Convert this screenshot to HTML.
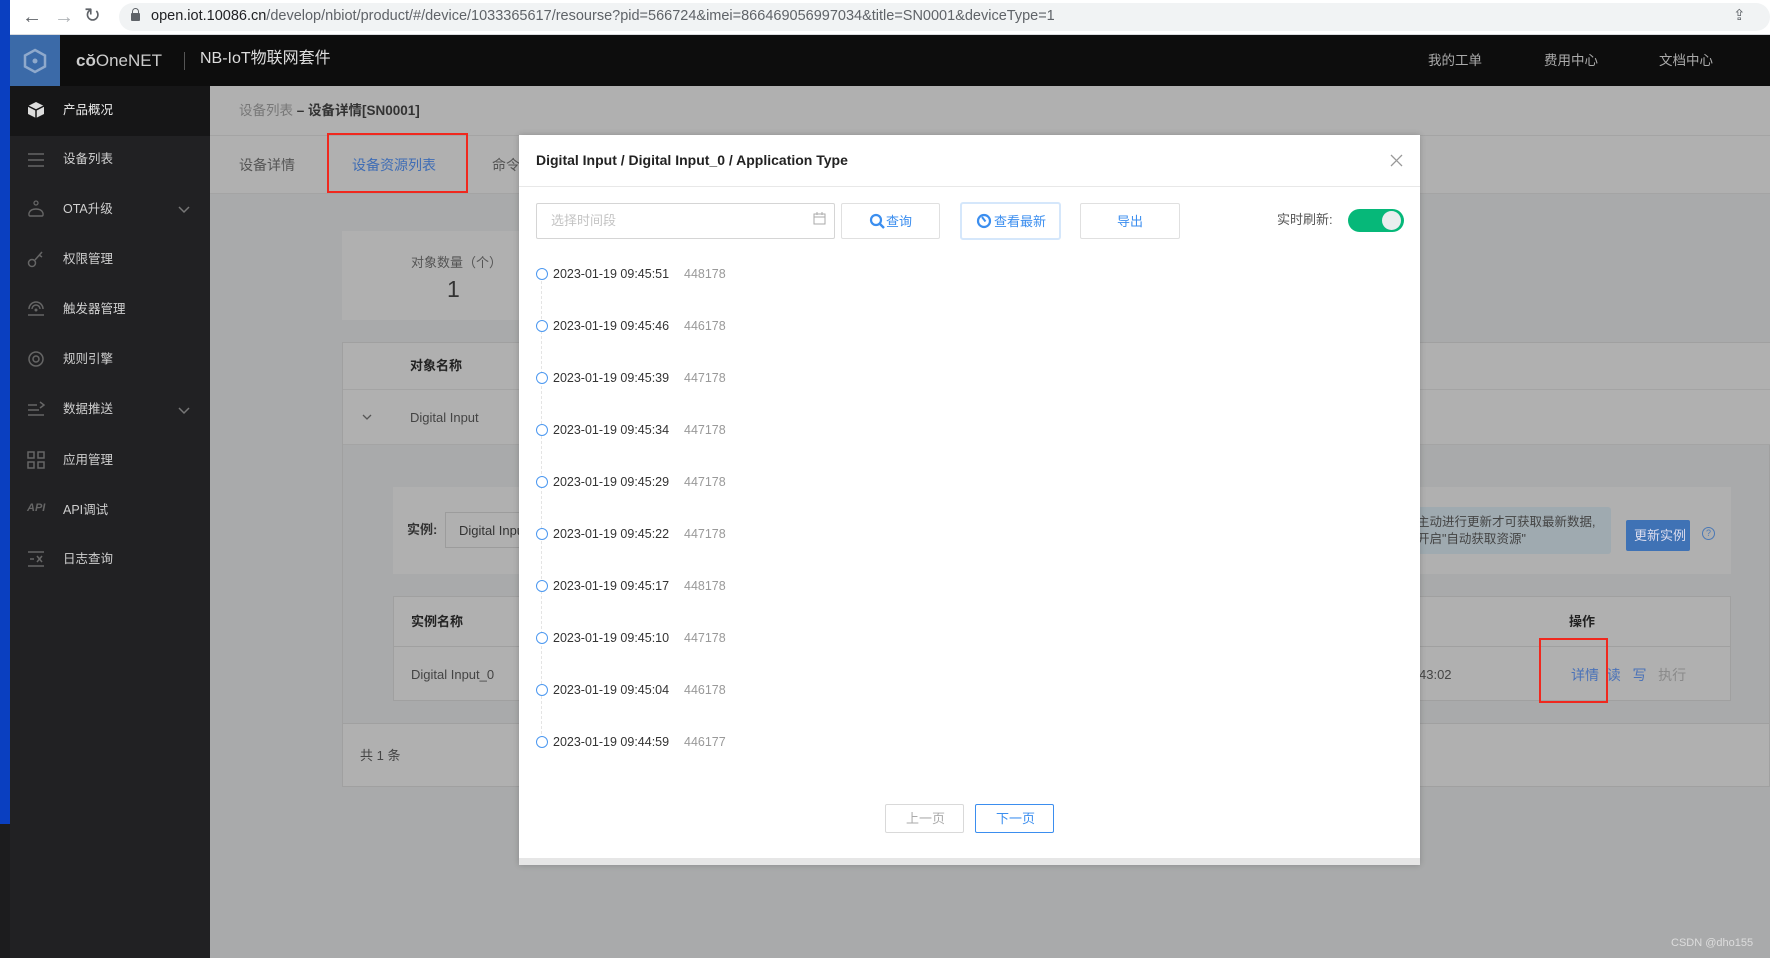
<!DOCTYPE html>
<html><head><meta charset="utf-8"><style>
*{box-sizing:border-box;margin:0;padding:0}
body{width:1770px;height:958px;overflow:hidden;position:relative;font-family:"Liberation Sans","Noto Sans CJK SC",sans-serif;background:#a9aaab;font-size:13.5px;color:#333}
.a{position:absolute}
.t{position:absolute;white-space:nowrap;line-height:1}
.side .t{color:#cfcfcf;font-size:12.5px}
.side svg{position:absolute}
.d{font-size:12.5px}
</style></head><body>
<div class="a" style="left:0;top:0;width:10px;height:824px;background:#0a3fc0"></div>
<div class="a" style="left:0;top:824px;width:10px;height:134px;background:#1c1c1e"></div>
<div class="a" style="left:10px;top:0;width:1760px;height:35px;background:#fff;border-bottom:1px solid #dadce0"></div>
<div class="a" style="left:119px;top:3px;width:1651px;height:28px;background:#f1f3f4;border-radius:14px"></div>
<div class="t" style="left:22px;top:7px;font-size:20px;color:#5f6368">←</div>
<div class="t" style="left:54px;top:7px;font-size:20px;color:#b0b3b7">→</div>
<div class="t" style="left:84px;top:6px;font-size:20px;color:#5f6368">↻</div>
<div class="a" style="left:131px;top:13px;width:9px;height:8px;background:#5f6368;border-radius:1px"></div>
<div class="a" style="left:132px;top:8px;width:7px;height:7px;border:1.5px solid #5f6368;border-bottom:none;border-radius:4px 4px 0 0"></div>
<div class="t" style="left:151px;top:9px;font-size:14.5px;color:#202124">open.iot.10086.cn<span style="color:#5f6368">/develop/nbiot/product/#/device/1033365617/resourse?pid=566724&amp;imei=866469056997034&amp;title=SN0001&amp;deviceType=1</span></div>
<div class="t" style="left:1733px;top:8px;font-size:15px;color:#5f6368">⇪</div>
<div class="a" style="left:10px;top:35px;width:1760px;height:51px;background:#0d0d0d"></div>
<div class="a" style="left:10px;top:35px;width:50px;height:51px;background:#3b6aa8"></div>
<svg class="a" style="left:22px;top:48px" width="26" height="26" viewBox="0 0 26 26"><polygon points="13,2 23,7.5 23,18.5 13,24 3,18.5 3,7.5" fill="none" stroke="#8fa9cc" stroke-width="2.5"/><circle cx="13" cy="13" r="2.5" fill="#8fa9cc"/></svg>
<div class="t" style="left:76px;top:52px;font-size:17px;color:#ccc;font-weight:bold">cŏ<span style="font-weight:normal">OneNET</span></div>
<div class="a" style="left:184px;top:52px;width:1px;height:18px;background:#555"></div>
<div class="t" style="left:200px;top:51px;font-size:16px;color:#ddd">NB-IoT物联网套件</div>
<div class="t" style="left:1428px;top:54px;font-size:13.5px;color:#aaa">我的工单</div>
<div class="t" style="left:1544px;top:54px;font-size:13.5px;color:#aaa">费用中心</div>
<div class="t" style="left:1659px;top:54px;font-size:13.5px;color:#aaa">文档中心</div>
<div class="side">
<div class="a" style="left:10px;top:86px;width:200px;height:872px;background:#212123"></div>
<div class="a" style="left:10px;top:86px;width:200px;height:50px;background:#161617"></div>
<svg style="left:27px;top:101px" width="18" height="18"><path d="M9 1L17 5V13L9 17L1 13V5Z" fill="#ddd"/><path d="M1 5L9 9L17 5M9 9V17" stroke="#161617" stroke-width="1.5" fill="none"/></svg>
<div class="t" style="left:63px;top:104px;color:#eee">产品概况</div>
<svg style="left:27px;top:151px" width="18" height="18"><path d="M1 3H17M1 9H17M1 15H17" stroke="#666" stroke-width="1.5"/></svg>
<div class="t" style="left:63px;top:153px">设备列表</div>
<svg style="left:27px;top:200px" width="18" height="18"><circle cx="9" cy="3" r="2" fill="none" stroke="#666" stroke-width="1.3"/><path d="M3 16C1 16 1 9 9 9C17 9 17 16 15 16Z" fill="none" stroke="#666" stroke-width="1.4"/></svg>
<div class="t" style="left:63px;top:203px">OTA升级</div>
<svg style="left:178px;top:206px" width="12" height="8"><path d="M1 1L6 6L11 1" stroke="#777" stroke-width="1.5" fill="none"/></svg>
<svg style="left:27px;top:250px" width="18" height="18"><circle cx="5" cy="13" r="3.5" fill="none" stroke="#666" stroke-width="1.5"/><path d="M8 10L15 2M12 5L15 7" stroke="#666" stroke-width="1.5"/></svg>
<div class="t" style="left:63px;top:253px">权限管理</div>
<svg style="left:27px;top:300px" width="18" height="18"><path d="M2 9A7 7 0 0 1 16 9M5 9A4 4 0 0 1 13 9M1 15H17" stroke="#666" stroke-width="1.5" fill="none"/><circle cx="9" cy="10" r="1.5" fill="#666"/></svg>
<div class="t" style="left:63px;top:303px">触发器管理</div>
<svg style="left:27px;top:350px" width="18" height="18"><circle cx="9" cy="9" r="7" fill="none" stroke="#666" stroke-width="1.5"/><circle cx="9" cy="9" r="3" fill="none" stroke="#666" stroke-width="1.5"/></svg>
<div class="t" style="left:63px;top:353px">规则引擎</div>
<svg style="left:27px;top:400px" width="18" height="18"><path d="M1 5H10M1 10H12M1 15H17M13 2L17 5L13 8" stroke="#666" stroke-width="1.5" fill="none"/></svg>
<div class="t" style="left:63px;top:403px">数据推送</div>
<svg style="left:178px;top:407px" width="12" height="8"><path d="M1 1L6 6L11 1" stroke="#777" stroke-width="1.5" fill="none"/></svg>
<svg style="left:27px;top:451px" width="18" height="18"><rect x="1" y="1" width="6" height="6" fill="none" stroke="#666" stroke-width="1.5"/><rect x="11" y="1" width="6" height="6" fill="none" stroke="#666" stroke-width="1.5"/><rect x="1" y="11" width="6" height="6" fill="none" stroke="#666" stroke-width="1.5"/><rect x="11" y="11" width="6" height="6" fill="none" stroke="#666" stroke-width="1.5"/></svg>
<div class="t" style="left:63px;top:454px">应用管理</div>
<div class="t" style="left:27px;top:503px;font-size:11px;color:#666;font-weight:bold;font-style:italic">API</div>
<div class="t" style="left:63px;top:504px">API调试</div>
<svg style="left:27px;top:550px" width="18" height="18"><path d="M1 2H17M1 16H17M3 9H7M10 6L15 12M15 6L10 12" stroke="#666" stroke-width="1.5" fill="none"/></svg>
<div class="t" style="left:63px;top:553px">日志查询</div>
</div>
<div class="a" style="left:210px;top:86px;width:1560px;height:50px;background:#b0b0b0;border-bottom:1px solid #a4a4a4"></div>
<div class="t" style="left:239px;top:104px;font-size:13.5px;color:#777">设备列表 <b style="color:#333">– 设备详情[SN0001]</b></div>
<div class="a" style="left:210px;top:136px;width:1560px;height:58px;background:#b0b0b0;border-bottom:1px solid #a4a4a4"></div>
<div class="t" style="left:239px;top:158px;font-size:14px;color:#555">设备详情</div>
<div class="t" style="left:352px;top:158px;font-size:14px;color:#3f6db5">设备资源列表</div>
<div class="t" style="left:492px;top:158px;font-size:14px;color:#555">命令</div>
<div class="a" style="left:327px;top:133px;width:141px;height:60px;border:2px solid #f0281e"></div>
<div class="a" style="left:342px;top:231px;width:300px;height:89px;background:#b0b0b0"></div>
<div class="t" style="left:411px;top:256px;font-size:13px;color:#555">对象数量（个）</div>
<div class="t" style="left:447px;top:278px;font-size:23px;color:#333">1</div>
<div class="a" style="left:342px;top:342px;width:1428px;height:445px;background:#a9aaab;border:1px solid #a0a0a0"></div>
<div class="a" style="left:343px;top:343px;width:1427px;height:47px;background:#b0b0b0;border-bottom:1px solid #a4a4a4"></div>
<div class="t" style="left:410px;top:359px;font-size:13px;color:#222;font-weight:bold">对象名称</div>
<div class="a" style="left:343px;top:390px;width:1427px;height:55px;background:#b0b0b0;border-bottom:1px solid #a4a4a4"></div>
<svg class="a" style="left:362px;top:414px" width="10" height="7"><path d="M1 1L5 5L9 1" stroke="#555" stroke-width="1.3" fill="none"/></svg>
<div class="t" style="left:410px;top:411px;font-size:13px;color:#444">Digital Input</div>
<div class="a" style="left:393px;top:487px;width:1338px;height:87px;background:#b0b0b0"></div>
<div class="t" style="left:407px;top:523px;font-size:13px;color:#333;font-weight:bold">实例:</div>
<div class="a" style="left:445px;top:512px;width:100px;height:36px;border:1px solid #9c9c9c;background:#b0b0b0"></div>
<div class="t" style="left:459px;top:524px;font-size:13px;color:#333">Digital Input</div>
<div class="a" style="left:1380px;top:507px;width:231px;height:47px;background:#9faab0;border-radius:3px"></div>
<div class="t" style="left:1417px;top:514px;font-size:12.5px;color:#444;line-height:17px">主动进行更新才可获取最新数据,<br>开启"自动获取资源"</div>
<div class="a" style="left:1626px;top:520px;width:64px;height:31px;background:#3f72b5;border-radius:2px"></div>
<div class="t" style="left:1634px;top:529px;font-size:13px;color:#dde">更新实例</div>
<div class="a" style="left:1702px;top:527px;width:13px;height:13px;border:1px solid #4a78b5;border-radius:50%;color:#4a78b5;font-size:9px;text-align:center;line-height:11px">?</div>
<div class="a" style="left:393px;top:596px;width:1338px;height:105px;background:#b0b0b0;border:1px solid #a0a0a0"></div>
<div class="a" style="left:394px;top:646px;width:1336px;height:1px;background:#a0a0a0"></div>
<div class="t" style="left:411px;top:615px;font-size:13px;color:#222;font-weight:bold">实例名称</div>
<div class="t" style="left:411px;top:668px;font-size:13px;color:#444">Digital Input_0</div>
<div class="t" style="left:1569px;top:615px;font-size:13px;color:#222;font-weight:bold">操作</div>
<div class="t" style="left:1419px;top:668px;font-size:13px;color:#444">43:02</div>
<div class="t" style="left:1571px;top:668px;font-size:14px;color:#4a72b8">详情&nbsp; 读&nbsp;&nbsp; 写&nbsp;&nbsp; <span style="color:#8a8a8a">执行</span></div>
<div class="a" style="left:1539px;top:638px;width:69px;height:65px;border:2px solid #f0281e"></div>
<div class="a" style="left:342px;top:723px;width:1428px;height:64px;background:#b0b0b0;border:1px solid #a0a0a0"></div>
<div class="t" style="left:360px;top:749px;font-size:13px;color:#444">共 1 条</div>
<div class="t" style="left:1671px;top:938px;font-size:11px;color:#ddd">CSDN @dho155</div>
<div class="a" style="left:519px;top:135px;width:901px;height:730px;background:#fff;box-shadow:0 0 6px rgba(0,0,0,.2)"></div>
<div class="a" style="left:519px;top:858px;width:901px;height:7px;background:#e6e6e6"></div>
<div class="a" style="left:519px;top:186px;width:901px;height:1px;background:#e8e8e8"></div>
<div class="t" style="left:536px;top:153px;font-size:14px;font-weight:bold;color:#222">Digital Input / Digital Input_0 / Application Type</div>
<svg class="a" style="left:1390px;top:154px" width="13" height="13"><path d="M1 1L12 12M12 1L1 12" stroke="#999" stroke-width="1.3"/></svg>
<div class="a" style="left:536px;top:203px;width:299px;height:36px;border:1px solid #d5d5d5;border-radius:2px"></div>
<div class="t" style="left:551px;top:214px;font-size:13px;color:#c4c4c4">选择时间段</div>
<svg class="a" style="left:813px;top:212px" width="13" height="13"><rect x="1" y="2" width="11" height="10" fill="none" stroke="#aaa"/><path d="M1 5H12M4 0V3M9 0V3" stroke="#aaa"/></svg>
<div class="a" style="left:841px;top:203px;width:99px;height:36px;border:1px solid #e0e0e0;border-radius:2px"></div>
<svg class="a" style="left:869px;top:213px" width="16" height="16"><circle cx="7" cy="7" r="5" fill="none" stroke="#3b8eef" stroke-width="2.2"/><path d="M10.5 10.5L15 15" stroke="#3b8eef" stroke-width="2.4"/></svg>
<div class="t" style="left:886px;top:215px;font-size:13px;color:#3b8eef">查询</div>
<div class="a" style="left:960px;top:202px;width:101px;height:38px;border:2px solid #d5e7fb;border-radius:3px"></div>
<svg class="a" style="left:976px;top:213px" width="16" height="16"><circle cx="8" cy="8" r="6" fill="none" stroke="#3b8eef" stroke-width="2.2"/><path d="M6 4L9.5 8.5" stroke="#3b8eef" stroke-width="2"/></svg>
<div class="t" style="left:994px;top:215px;font-size:13px;color:#3b8eef">查看最新</div>
<div class="a" style="left:1080px;top:203px;width:100px;height:36px;border:1px solid #e0e0e0;border-radius:2px"></div>
<div class="t" style="left:1117px;top:215px;font-size:13px;color:#3b8eef">导出</div>
<div class="t" style="left:1277px;top:213px;font-size:13px;color:#555">实时刷新:</div>
<div class="a" style="left:1348px;top:209px;width:56px;height:23px;background:#06b879;border-radius:12px"></div>
<div class="a" style="left:1382px;top:211px;width:19px;height:19px;background:#e9eeee;border-radius:50%"></div>
<div class="a" style="left:541px;top:281px;width:0;height:458px;border-left:1px dashed #e4e4e4"></div>
<div class="a" style="left:885px;top:804px;width:79px;height:29px;border:1px solid #d9d9d9;border-radius:2px"></div>
<div class="t" style="left:906px;top:812px;font-size:13px;color:#aaa">上一页</div>
<div class="a" style="left:975px;top:804px;width:79px;height:29px;border:1px solid #3b8eef;border-radius:2px"></div>
<div class="t" style="left:996px;top:812px;font-size:13px;color:#3b8eef">下一页</div>
<div class="a" style="left:536px;top:268px;width:12px;height:12px;border:1.5px solid #4c98f0;border-radius:50%;background:#fff"></div><div class="t d" style="left:553px;top:268px;color:#333">2023-01-19 09:45:51</div><div class="t d" style="left:684px;top:268px;color:#999">448178</div>
<div class="a" style="left:536px;top:320px;width:12px;height:12px;border:1.5px solid #4c98f0;border-radius:50%;background:#fff"></div><div class="t d" style="left:553px;top:320px;color:#333">2023-01-19 09:45:46</div><div class="t d" style="left:684px;top:320px;color:#999">446178</div>
<div class="a" style="left:536px;top:372px;width:12px;height:12px;border:1.5px solid #4c98f0;border-radius:50%;background:#fff"></div><div class="t d" style="left:553px;top:372px;color:#333">2023-01-19 09:45:39</div><div class="t d" style="left:684px;top:372px;color:#999">447178</div>
<div class="a" style="left:536px;top:424px;width:12px;height:12px;border:1.5px solid #4c98f0;border-radius:50%;background:#fff"></div><div class="t d" style="left:553px;top:424px;color:#333">2023-01-19 09:45:34</div><div class="t d" style="left:684px;top:424px;color:#999">447178</div>
<div class="a" style="left:536px;top:476px;width:12px;height:12px;border:1.5px solid #4c98f0;border-radius:50%;background:#fff"></div><div class="t d" style="left:553px;top:476px;color:#333">2023-01-19 09:45:29</div><div class="t d" style="left:684px;top:476px;color:#999">447178</div>
<div class="a" style="left:536px;top:528px;width:12px;height:12px;border:1.5px solid #4c98f0;border-radius:50%;background:#fff"></div><div class="t d" style="left:553px;top:528px;color:#333">2023-01-19 09:45:22</div><div class="t d" style="left:684px;top:528px;color:#999">447178</div>
<div class="a" style="left:536px;top:580px;width:12px;height:12px;border:1.5px solid #4c98f0;border-radius:50%;background:#fff"></div><div class="t d" style="left:553px;top:580px;color:#333">2023-01-19 09:45:17</div><div class="t d" style="left:684px;top:580px;color:#999">448178</div>
<div class="a" style="left:536px;top:632px;width:12px;height:12px;border:1.5px solid #4c98f0;border-radius:50%;background:#fff"></div><div class="t d" style="left:553px;top:632px;color:#333">2023-01-19 09:45:10</div><div class="t d" style="left:684px;top:632px;color:#999">447178</div>
<div class="a" style="left:536px;top:684px;width:12px;height:12px;border:1.5px solid #4c98f0;border-radius:50%;background:#fff"></div><div class="t d" style="left:553px;top:684px;color:#333">2023-01-19 09:45:04</div><div class="t d" style="left:684px;top:684px;color:#999">446178</div>
<div class="a" style="left:536px;top:736px;width:12px;height:12px;border:1.5px solid #4c98f0;border-radius:50%;background:#fff"></div><div class="t d" style="left:553px;top:736px;color:#333">2023-01-19 09:44:59</div><div class="t d" style="left:684px;top:736px;color:#999">446177</div>
</body></html>
